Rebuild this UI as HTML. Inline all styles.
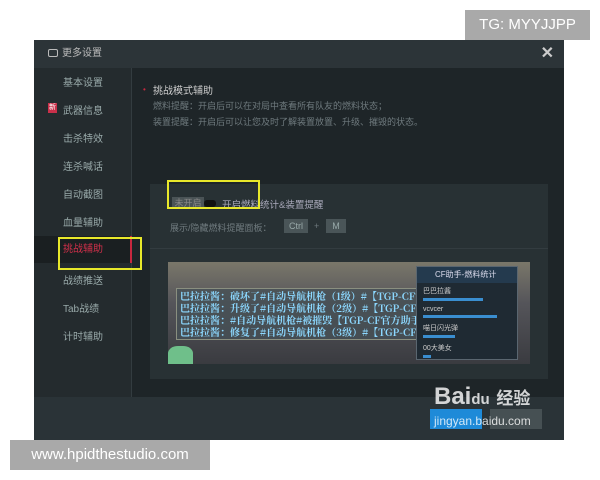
<!DOCTYPE html>
<html><head><meta charset="utf-8"><style>
*{margin:0;padding:0;box-sizing:border-box}
body{width:600px;height:480px;background:#fff;position:relative;overflow:hidden;font-family:"Liberation Sans","Noto Sans CJK SC",sans-serif}
.a{position:absolute}
.tg{left:465px;top:10px;width:125px;height:30px;background:#a9a9a9;color:#fff;font-size:15px;line-height:30px;text-align:center}
.www{left:10px;top:440px;width:200px;height:30px;background:#a9a9a9;color:#fff;font-size:15px;line-height:30px;text-align:center}
.dlg{left:34px;top:40px;width:530px;height:400px;background:#1e2528}
.title{left:0;top:0;width:530px;height:28px;background:#2c3438;color:#bbb;font-size:10px;line-height:28px;padding-left:14px}
.side{left:0;top:28px;width:98px;height:329px;background:#242b2e;border-right:1px solid #333c40}
.side div{position:absolute;left:0;width:98px;color:#9aa;font-size:10px;text-align:left;padding-left:29px}
.bot{left:0;top:357px;width:530px;height:43px;background:#2a3337}
.tx{color:#6f7a7e;font-size:9px}
.panel{left:116px;top:144px;width:398px;height:195px;background:#283134}
.img{left:134px;top:222px;width:362px;height:102px;background:linear-gradient(180deg,#7a776a 0%,#55555a 40%,#3a3b40 100%)}
.chat{color:#8cd8ff;font-size:10px;font-weight:bold;font-family:"Noto Serif CJK SC",serif;line-height:12px;white-space:nowrap}
.yb{border:2px solid #e8e82a}
</style></head><body>
<div class="a tg">TG: MYYJJPP</div>
<div class="a dlg">
 <div class="a title"><span style="display:inline-block;width:10px;height:8px;border:1px solid #bbb;border-radius:2px;margin-right:4px;vertical-align:-1px"></span>更多设置<span style="position:absolute;right:10px;top:0;font-size:16px;color:#ccc;font-weight:bold">✕</span></div>
 <div class="a side">
  <div style="top:6px">基本设置</div>
  <div style="top:34px"><span style="position:absolute;left:14px;top:1px;width:9px;height:10px;background:#c9304a;color:#fff;font-size:7px;line-height:10px;text-align:center">新</span>武器信息</div>
  <div style="top:62px">击杀特效</div>
  <div style="top:90px">连杀喊话</div>
  <div style="top:118px">自动截图</div>
  <div style="top:146px">血量辅助</div>
  <div style="top:168px;height:27px;background:#1a1f21;color:#d0304a;line-height:27px;border-right:2px solid #c8283f">挑战辅助</div>
  <div style="top:204px">战绩推送</div>
  <div style="top:232px">Tab战绩</div>
  <div style="top:260px">计时辅助</div>
 </div>
 <div class="a" style="left:109px;top:45px;color:#c8283f;font-size:8px">•</div>
 <div class="a" style="left:119px;top:42px;color:#ccc;font-size:10px">挑战模式辅助</div>
 <div class="a tx" style="left:119px;top:59px">燃料提醒：开启后可以在对局中查看所有队友的燃料状态；</div>
 <div class="a tx" style="left:119px;top:75px">装置提醒：开启后可以让您及时了解装置放置、升级、摧毁的状态。</div>
 <div class="a panel"></div>
 <div class="a" style="left:138px;top:157px;width:32px;height:12px;background:#4a5356;color:#888;font-size:9px;text-align:center;line-height:12px">未开启</div>
 <div class="a" style="left:170px;top:160px;width:12px;height:7px;background:#111;border-radius:3px"></div>
 <div class="a" style="left:188px;top:157px;color:#aab;font-size:9.5px">开启燃料统计&amp;装置提醒</div>
 <div class="a tx" style="left:136px;top:181px">展示/隐藏燃料提醒面板：</div>
 <div class="a" style="left:250px;top:179px;width:24px;height:14px;background:#4a5558;color:#9aa;font-size:9px;text-align:center;line-height:14px">Ctrl</div>
 <div class="a tx" style="left:280px;top:181px">+</div>
 <div class="a" style="left:292px;top:179px;width:20px;height:14px;background:#4a5558;color:#9aa;font-size:9px;text-align:center;line-height:14px">M</div>
 <div class="a" style="left:116px;top:208px;width:398px;height:1px;background:#333c40"></div>
 <div class="a img">
  <div class="a" style="left:8px;top:26px;width:245px;height:52px;background:rgba(70,80,85,.75);border:1px solid #8a8f80"></div>
  <div class="a chat" style="left:12px;top:28px">巴拉拉酱：破坏了#自动导航机枪（1级）#【TGP-CF官方助</div>
  <div class="a chat" style="left:12px;top:40px">巴拉拉酱：升级了#自动导航机枪（2级）#【TGP-CF官方助</div>
  <div class="a chat" style="left:12px;top:52px">巴拉拉酱：#自动导航机枪#被摧毁【TGP-CF官方助手】</div>
  <div class="a chat" style="left:12px;top:64px">巴拉拉酱：修复了#自动导航机枪（3级）#【TGP-CF官方助</div>
  <div class="a" style="left:0;top:84px;width:25px;height:18px;background:#6fbf8a;border-radius:40% 40% 0 0"></div>
  <div class="a" style="left:248px;top:4px;width:102px;height:94px;background:#1f2a33;border:1px solid #5a6670">
   <div style="height:16px;background:#243a4e;color:#dde;font-size:8px;line-height:16px;padding-left:18px">CF助手-燃料统计</div>
   <div style="color:#ccc;font-size:7px;padding:3px 6px 0">巴巴拉酱</div>
   <div style="margin:2px 6px;width:60px;height:3px;background:#3a8ed0"></div>
   <div style="color:#ccc;font-size:7px;padding:3px 6px 0">vcvcer</div>
   <div style="margin:2px 6px;width:74px;height:3px;background:#3a8ed0"></div>
   <div style="color:#ccc;font-size:7px;padding:3px 6px 0">喵日闪光弹</div>
   <div style="margin:2px 6px;width:32px;height:3px;background:#3a8ed0"></div>
   <div style="color:#ccc;font-size:7px;padding:3px 6px 0">00大美女</div>
   <div style="margin:2px 6px;width:8px;height:3px;background:#3a8ed0"></div>
  </div>
 </div>
 <div class="a bot"></div>
 <div class="a" style="left:396px;top:369px;width:52px;height:20px;background:#1e8ad8"></div>
 <div class="a" style="left:456px;top:369px;width:52px;height:20px;background:#465053"></div>
 <div class="a" style="left:400px;top:343px;color:rgba(255,255,255,.8);font-size:24px;font-weight:bold">Bai<span style="font-size:15px">du</span> <span style="font-size:17px">经验</span></div>
 <div class="a" style="left:400px;top:374px;color:rgba(255,255,255,.8);font-size:12px">jingyan.baidu.com</div>
</div>
<div class="a yb" style="left:167px;top:180px;width:93px;height:29px"></div>
<div class="a yb" style="left:58px;top:237px;width:84px;height:33px"></div>
<div class="a www">www.hpidthestudio.com</div>
</body></html>
